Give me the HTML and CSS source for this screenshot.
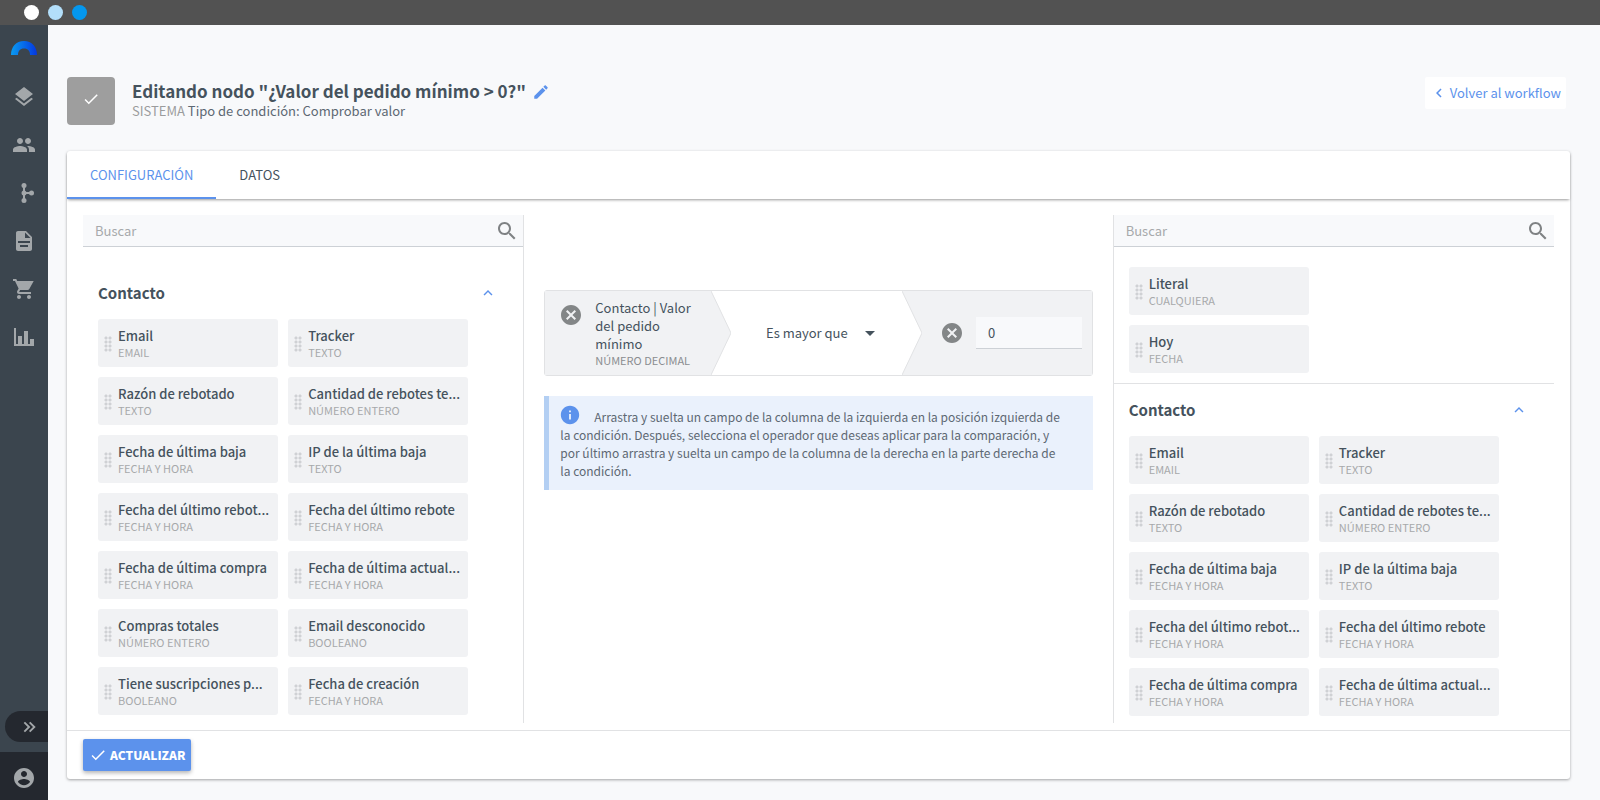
FILE: index.html
```html
<!DOCTYPE html>
<html lang="es">
<head>
    <meta charset="UTF-8">
    <meta name="viewport" content="width=device-width, initial-scale=1.0">
    <title>Editando nodo</title>
    <link rel="stylesheet" href="styles.css">
</head>
<body>
    <svg class="defs" width="0" height="0" aria-hidden="true">
        <symbol id="i-check" viewBox="0 0 24 24"><path d="M9 16.17L4.83 12l-1.42 1.41L9 19 21 7l-1.41-1.41z"/></symbol>
        <symbol id="i-search" viewBox="0 0 24 24"><path d="M15.5 14h-.79l-.28-.27C15.41 12.59 16 11.11 16 9.5 16 5.91 13.09 3 9.5 3S3 5.91 3 9.5 5.91 16 9.5 16c1.61 0 3.09-.59 4.23-1.57l.27.28v.79l5 4.99L20.49 19l-4.99-5zm-6 0C7.01 14 5 11.99 5 9.5S7.01 5 9.5 5 14 7.01 14 9.5 11.99 14 9.5 14z"/></symbol>
        <symbol id="i-cancel" viewBox="0 0 24 24"><path d="M12 2C6.47 2 2 6.47 2 12s4.47 10 10 10 10-4.47 10-10S17.53 2 12 2zm5 13.59L15.59 17 12 13.41 8.41 17 7 15.59 10.59 12 7 8.41 8.41 7 12 10.59 15.59 7 17 8.41 13.41 12 17 15.59z"/></symbol>
        <symbol id="i-up" viewBox="0 0 24 24"><path d="M12 8l-6 6 1.41 1.41L12 10.83l4.59 4.58L18 14z"/></symbol>
    </svg>

    <div class="topbar">
        <span class="dot dot-white"></span>
        <span class="dot dot-light"></span>
        <span class="dot dot-blue"></span>
    </div>

    <div class="app">
        <nav class="sidebar" aria-label="Principal">
            <a href="#" class="logo" aria-label="Inicio">
                <svg width="26" height="14" viewBox="0 0 26 14">
                    <defs>
                        <linearGradient id="arc" x1="0" x2="1" y1="0" y2="0">
                            <stop offset="0" stop-color="#0a9bf0"/>
                            <stop offset="0.6" stop-color="#0560ea"/>
                            <stop offset="1" stop-color="#0637dd"/>
                        </linearGradient>
                    </defs>
                    <path fill="url(#arc)" d="M0 14C0 6 5 0 13 0s13 6 13 14h-7c0-4-2-6.500-6-6.500S7 10 7 14z"/>
                </svg>
            </a>
            <a href="#" class="nav-item" aria-label="Capas"><svg viewBox="0 0 24 24"><path d="M11.99 18.54l-7.37-5.73L3 14.07l9 7 9-7-1.630-1.270-7.380 5.740zM12 16l7.360-5.730L21 9l-9-7-9 7 1.630 1.270L12 16z"/></svg></a>
            <a href="#" class="nav-item" aria-label="Contactos"><svg viewBox="0 0 24 24"><path d="M16 11c1.660 0 2.990-1.340 2.990-3S17.660 5 16 5s-3 1.340-3 3 1.340 3 3 3zm-8 0c1.660 0 2.990-1.340 2.990-3S9.660 5 8 5 5 6.340 5 8s1.340 3 3 3zm0 2c-2.330 0-7 1.170-7 3.500V19h14v-2.500C15 14.170 10.330 13 8 13zm8 0c-.29 0-.62.02-.97.05 1.160.84 1.970 1.970 1.970 3.450V19h6v-2.500c0-2.330-4.670-3.500-7-3.500z"/></svg></a>
            <a href="#" class="nav-item" aria-label="Workflows"><svg viewBox="0 0 24 24"><g fill="none" stroke="currentColor" stroke-width="2"><path d="M12 4v16M12 12h8"/></g><circle cx="12" cy="4.500" r="2.500"/><circle cx="12" cy="12" r="2.500"/><circle cx="12" cy="19.500" r="2.500"/><circle cx="19.500" cy="12" r="2.500"/></svg></a>
            <a href="#" class="nav-item" aria-label="Documentos"><svg viewBox="0 0 24 24"><path d="M14 2H6c-1.100 0-1.990.9-1.990 2L4 20c0 1.100.89 2 1.990 2H18c1.100 0 2-.9 2-2V8l-6-6zm2 16H8v-2h8v2zm2-4H6v-2h12v2zm-5-5V3.500L18.500 9H13z"/></svg></a>
            <a href="#" class="nav-item" aria-label="Pedidos"><svg viewBox="0 0 24 24"><path d="M7 18c-1.100 0-1.990.9-1.990 2S5.900 22 7 22s2-.9 2-2-.9-2-2-2zM1 2v2h2l3.600 7.590-1.350 2.450c-.16.28-.25.61-.25.960 0 1.100.9 2 2 2h12v-2H7.420c-.14 0-.25-.11-.25-.25l.03-.12.900-1.630h7.450c.75 0 1.410-.41 1.750-1.030L21.700 4H5.210l-.94-2H1zm16 16c-1.100 0-1.990.9-1.990 2s.89 2 1.990 2 2-.9 2-2-.9-2-2-2z"/></svg></a>
            <a href="#" class="nav-item" aria-label="Informes"><svg viewBox="0 0 24 24"><path d="M2 3h2v16h18v2H2zM6 11h4v8H6zM12 6h4v13h-4zM18 14h4v5h-4z"/></svg></a>
            <div class="sidebar-end">
                <button type="button" class="expand" aria-label="Expandir"><svg viewBox="0 0 24 24"><path d="M4 6L6 4l8 8-8 8-2-2 6-6zM12 6l2-2 8 8-8 8-2-2 6-6z"/></svg></button>
                <a href="#" class="account" aria-label="Cuenta"><svg viewBox="0 0 24 24"><path d="M12 2C6.480 2 2 6.480 2 12s4.480 10 10 10 10-4.480 10-10S17.520 2 12 2zm0 3c1.660 0 3 1.340 3 3s-1.340 3-3 3-3-1.340-3-3 1.340-3 3-3zm0 14.200c-2.500 0-4.710-1.280-6-3.220.03-1.990 4-3.080 6-3.080 1.990 0 5.970 1.090 6 3.080-1.290 1.940-3.500 3.220-6 3.220z"/></svg></a>
            </div>
        </nav>

        <main class="page">
            <header class="page-header">
                <div class="node-icon"><svg><use href="#i-check"/></svg></div>
                <div class="heading">
                    <div class="title-row">
                        <h1>Editando nodo "¿Valor del pedido mínimo &gt; 0?"</h1>
                        <button type="button" class="edit" aria-label="Editar nombre"><svg viewBox="0 0 24 24"><path d="M3 17.250V21h3.750L17.810 9.940l-3.750-3.750L3 17.250zM20.710 7.040c.39-.39.39-1.020 0-1.410l-2.340-2.340c-.39-.39-1.020-.39-1.410 0l-1.830 1.830 3.750 3.750 1.830-1.830z"/></svg></button>
                    </div>
                    <p class="subtitle"><span>SISTEMA</span> Tipo de condición: Comprobar valor</p>
                </div>
                <a href="#" class="back"><svg viewBox="0 0 24 24"><path d="M15.410 7.410L14 6l-6 6 6 6 1.410-1.410L10.830 12z"/></svg>Volver al workflow</a>
            </header>

            <section class="card">
                <div class="tabs" role="tablist">
                    <button type="button" class="tab active" role="tab" aria-selected="true">CONFIGURACIÓN</button>
                    <button type="button" class="tab" role="tab" aria-selected="false">DATOS</button>
                </div>

                <div class="columns">
                    <div class="column column-left">
                        <label class="search"><input type="search" placeholder="Buscar" aria-label="Buscar"><svg><use href="#i-search"/></svg></label>
                        <div class="group group-left">
                            <div class="group-header"><h2>Contacto</h2><button type="button" aria-label="Plegar Contacto"><svg><use href="#i-up"/></svg></button></div>
                            <ul class="fields">
                                <li class="field"><b>Email</b><small>EMAIL</small></li>
                                <li class="field"><b>Tracker</b><small>TEXTO</small></li>
                                <li class="field"><b>Razón de rebotado</b><small>TEXTO</small></li>
                                <li class="field"><b>Cantidad de rebotes te...</b><small>NÚMERO ENTERO</small></li>
                                <li class="field"><b>Fecha de última baja</b><small>FECHA Y HORA</small></li>
                                <li class="field"><b>IP de la última baja</b><small>TEXTO</small></li>
                                <li class="field"><b>Fecha del último rebot...</b><small>FECHA Y HORA</small></li>
                                <li class="field"><b>Fecha del último rebote</b><small>FECHA Y HORA</small></li>
                                <li class="field"><b>Fecha de última compra</b><small>FECHA Y HORA</small></li>
                                <li class="field"><b>Fecha de última actual...</b><small>FECHA Y HORA</small></li>
                                <li class="field"><b>Compras totales</b><small>NÚMERO ENTERO</small></li>
                                <li class="field"><b>Email desconocido</b><small>BOOLEANO</small></li>
                                <li class="field"><b>Tiene suscripciones p...</b><small>BOOLEANO</small></li>
                                <li class="field"><b>Fecha de creación</b><small>FECHA Y HORA</small></li>
                            </ul>
                        </div>
                    </div>

                    <div class="center">
                        <div class="condition">
                            <div class="operand operand-left">
                                <button type="button" class="remove" aria-label="Quitar campo"><svg><use href="#i-cancel"/></svg></button>
                                <div class="operand-name">Contacto | Valor del pedido mínimo<small>NÚMERO DECIMAL</small></div>
                            </div>
                            <svg class="arrow arrow-out" viewBox="0 0 20 84" preserveAspectRatio="none"><path d="M0 0L20 42L0 84"/></svg>
                            <div class="operator">
                                <select aria-label="Operador">
                                    <option>Es mayor que</option>
                                    <option>Es menor que</option>
                                    <option>Es igual a</option>
                                </select>
                                <svg viewBox="0 0 10 5"><path d="M0 0h10L5 5z"/></svg>
                            </div>
                            <svg class="arrow arrow-in" viewBox="0 0 20 84" preserveAspectRatio="none"><path d="M0 0L20 42L0 84"/></svg>
                            <div class="operand operand-right">
                                <button type="button" class="remove" aria-label="Quitar valor"><svg><use href="#i-cancel"/></svg></button>
                                <input type="text" value="0" aria-label="Valor">
                            </div>
                        </div>
                        <p class="info"><svg viewBox="0 0 24 24"><path d="M12 2C6.480 2 2 6.480 2 12s4.480 10 10 10 10-4.480 10-10S17.520 2 12 2zm1 15h-2v-6h2v6zm0-8h-2V7h2v2z"/></svg>Arrastra y suelta un campo de la columna de la izquierda en la posición izquierda de la condición. Después, selecciona el operador que deseas aplicar para la comparación, y por último arrastra y suelta un campo de la columna de la derecha en la parte derecha de la condición.</p>
                    </div>

                    <div class="column column-right">
                        <label class="search"><input type="search" placeholder="Buscar" aria-label="Buscar"><svg><use href="#i-search"/></svg></label>
                        <ul class="fields fields-basic">
                            <li class="field"><b>Literal</b><small>CUALQUIERA</small></li>
                            <li class="field"><b>Hoy</b><small>FECHA</small></li>
                        </ul>
                        <div class="group">
                            <div class="group-header"><h2>Contacto</h2><button type="button" aria-label="Plegar Contacto"><svg><use href="#i-up"/></svg></button></div>
                            <ul class="fields">
                                <li class="field"><b>Email</b><small>EMAIL</small></li>
                                <li class="field"><b>Tracker</b><small>TEXTO</small></li>
                                <li class="field"><b>Razón de rebotado</b><small>TEXTO</small></li>
                                <li class="field"><b>Cantidad de rebotes te...</b><small>NÚMERO ENTERO</small></li>
                                <li class="field"><b>Fecha de última baja</b><small>FECHA Y HORA</small></li>
                                <li class="field"><b>IP de la última baja</b><small>TEXTO</small></li>
                                <li class="field"><b>Fecha del último rebot...</b><small>FECHA Y HORA</small></li>
                                <li class="field"><b>Fecha del último rebote</b><small>FECHA Y HORA</small></li>
                                <li class="field"><b>Fecha de última compra</b><small>FECHA Y HORA</small></li>
                                <li class="field"><b>Fecha de última actual...</b><small>FECHA Y HORA</small></li>
                            </ul>
                        </div>
                    </div>
                </div>

                <footer class="card-footer">
                    <button type="button" class="submit"><svg><use href="#i-check"/></svg>ACTUALIZAR</button>
                </footer>
            </section>
        </main>
    </div>
</body>
</html>
```

FILE: styles.css
```css
* {
    box-sizing: border-box;
}
body {
    margin: 0;
    min-height: 100vh;
    display: flex;
    flex-direction: column;
    background: #f8f9fb;
    color: #45525d;
    font-family: "Noto Sans CJK SC", "Source Sans Pro", sans-serif;
    font-size: 13px;
    line-height: 18px;
}
button, input, select {
    font: inherit;
    color: inherit;
    border: 0;
    padding: 0;
    background: none;
}
button, select {
    cursor: pointer;
}
a {
    color: inherit;
    text-decoration: none;
}
h1, h2, p, ul {
    margin: 0;
    padding: 0;
}
ul {
    list-style: none;
}
svg {
    display: block;
    flex: none;
    fill: currentColor;
}
.defs {
    position: absolute;
}

/* top bar */
.topbar {
    display: flex;
    align-items: center;
    gap: 9px;
    height: 25px;
    padding-left: 24px;
    background: #525252;
}
.dot {
    width: 15px;
    height: 15px;
    border-radius: 50%;
}
.dot-white { background: #fff; }
.dot-light { background: #b3dffa; }
.dot-blue { background: #0497ee; }

.app {
    flex: 1;
    display: flex;
}

/* sidebar */
.sidebar {
    display: flex;
    flex-direction: column;
    width: 48px;
    background: #3b454e;
    color: #a3a7aa;
}
.logo {
    display: flex;
    justify-content: center;
    height: 48px;
    padding-top: 16px;
}
.nav-item {
    display: flex;
    align-items: center;
    justify-content: center;
    height: 48px;
}
.nav-item svg, .account svg {
    width: 24px;
    height: 24px;
}
.sidebar-end {
    display: flex;
    flex-direction: column;
    align-items: flex-end;
    gap: 10px;
    margin-top: auto;
}
.expand {
    display: flex;
    align-items: center;
    justify-content: center;
    width: 43px;
    height: 31px;
    padding-left: 4px;
    border-radius: 16px 0 0 16px;
    background: #24282f;
}
.expand svg {
    width: 16px;
    height: 16px;
}
.account {
    display: flex;
    align-items: center;
    justify-content: center;
    width: 48px;
    height: 48px;
    padding-top: 4px;
    background: #24282f;
}

/* page */
.page {
    flex: 1;
    display: flex;
    flex-direction: column;
    gap: 26px;
    min-width: 0;
    padding: 52px 30px 21px 19px;
}
.page-header {
    display: flex;
    align-items: flex-start;
    padding-right: 4px;
}
.node-icon {
    display: flex;
    align-items: center;
    justify-content: center;
    width: 48px;
    height: 48px;
    padding-bottom: 4px;
    border-radius: 4px;
    background: #9e9e9e;
    color: #fff;
}
.node-icon svg {
    width: 18px;
    height: 18px;
}
.heading {
    flex: 1;
    padding: 3px 17px 0;
}
.title-row {
    display: flex;
    align-items: center;
    gap: 6px;
}
h1 {
    font-size: 17px;
    line-height: 22px;
}
.edit {
    padding-top: 2px;
    color: #5c92ec;
}
.edit svg {
    width: 18px;
    height: 18px;
}
.subtitle {
    color: #5d6873;
}
.subtitle span {
    color: #9b9c9d;
}
.back {
    display: flex;
    align-items: center;
    gap: 2px;
    height: 32px;
    padding: 0 5px;
    border-radius: 2px;
    background: #fff;
    color: #5c92ec;
}
.back svg {
    width: 18px;
    height: 18px;
}

/* card */
.card {
    flex: 1;
    display: flex;
    flex-direction: column;
    border-radius: 3px;
    background: #fff;
    box-shadow: 0 1px 3px rgba(0, 0, 0, 0.35);
}
.tabs {
    display: flex;
    height: 48px;
    border-radius: 3px 3px 0 0;
    box-shadow: 0 2px 3px -1px rgba(0, 0, 0, 0.4);
}
.tab {
    padding: 2px 23px 0;
    border-bottom: 2px solid transparent;
}
.tab.active {
    border-color: #5c92ec;
    color: #5c92ec;
}
.columns {
    flex: 1;
    display: grid;
    grid-template-columns: 3fr 4fr 3fr;
    padding: 16px 16px 7px;
}
.column {
    min-width: 0;
}
.column-left {
    border-right: 1px solid #e1e2e4;
}
.column-right {
    border-left: 1px solid #e1e2e4;
}
.search {
    display: flex;
    align-items: center;
    height: 32px;
    padding: 0 4px 0 12px;
    border-bottom: 1px solid #cdd1d6;
    background: #f8f9fb;
    color: #7f8284;
}
.search input {
    flex: 1;
    min-width: 0;
    color: #45525d;
    outline: none;
}
.search input::placeholder {
    color: #a7a9ab;
}
.search svg {
    width: 24px;
    height: 24px;
}

.group {
    padding: 0 15px;
}
.group-left {
    padding-top: 20px;
}
.group-header {
    display: flex;
    align-items: center;
    justify-content: space-between;
    height: 52px;
    padding-right: 11px;
}
.group-header button {
    color: #5c92ec;
}
.group-header svg {
    width: 18px;
    height: 18px;
}
h2 {
    font-size: 15px;
    line-height: 20px;
}
.fields {
    display: grid;
    grid-template-columns: 1fr 1fr;
    gap: 10px;
    padding-right: 40px;
}
.fields-basic {
    padding: 20px 55px 10px 15px;
    border-bottom: 1px solid #e1e2e4;
}
.fields-basic .field {
    grid-column: 1;
}
.field {
    display: grid;
    grid-template-columns: 8px 1fr;
    column-gap: 6px;
    align-content: center;
    height: 48px;
    padding: 1px 2px 0 6px;
    border-radius: 3px;
    background: #f1f2f4;
    cursor: grab;
}
/* drag handle */
.field::before {
    content: "";
    grid-row: 1 / 3;
    align-self: center;
    height: 16px;
    background: radial-gradient(circle, #cfd1d4 1px, transparent 2px) 0 0 / 4px 4px;
}
.field b {
    font-weight: 500;
    white-space: nowrap;
}
small {
    display: block;
    font-size: 11px;
    line-height: 15px;
}
.field small {
    color: #a7a9ab;
}

/* condition */
.center {
    min-width: 0;
    padding: 75px 20px 0;
}
.condition {
    display: grid;
    grid-template-columns: minmax(0, 166fr) 20px minmax(0, 171fr) 20px minmax(0, 170fr);
    min-height: 86px;
    border: 1px solid #e1e2e4;
    border-radius: 3px;
}
.arrow {
    width: 100%;
    height: 100%;
    stroke: #e1e2e4;
}
.arrow-out {
    fill: #f1f2f4;
}
.arrow-in {
    background: #f1f2f4;
    fill: #fff;
}
.operand {
    display: flex;
    background: #f1f2f4;
}
.operand-left {
    gap: 12px;
    padding: 8px 8px 7px 14px;
}
.operand-left .remove {
    align-self: flex-start;
    padding-top: 4px;
}
.operand-name small {
    color: #8a8d90;
}
.operand-right {
    align-items: center;
    gap: 12px;
    padding: 0 10px 0 18px;
}
.operand-right input {
    flex: 1;
    min-width: 0;
    height: 32px;
    padding: 0 12px;
    border-bottom: 1px solid #cdd1d6;
    background: #f8f9fb;
}
.remove {
    color: #838687;
}
.remove svg {
    width: 24px;
    height: 24px;
}
.operator {
    display: grid;
    align-items: center;
    justify-content: center;
    padding-left: 8px;
}
.operator select {
    grid-area: 1 / 1;
    padding-right: 26px;
    appearance: none;
}
.operator svg {
    grid-area: 1 / 1;
    justify-self: end;
    width: 10px;
    height: 5px;
    pointer-events: none;
}
.info {
    margin-top: 20px;
    padding: 12px 25px 10px 11px;
    border-left: 5px solid #b3cff3;
    background: #eaf1fc;
    color: #5d6873;
    font-size: 12px;
}
.info svg {
    display: inline-block;
    width: 22px;
    height: 22px;
    margin: -4px 13px -4px -1px;
    color: #5c92ec;
}

/* footer */
.card-footer {
    padding: 8px 16px;
    border-top: 1px solid #e1e2e4;
}
.submit {
    display: flex;
    align-items: center;
    gap: 3px;
    height: 32px;
    padding: 0 6px;
    border-radius: 2px;
    background: #5c92ec;
    box-shadow: 0 2px 4px rgba(0, 0, 0, 0.3);
    color: #fff;
    font-size: 12px;
    font-weight: 900;
}
.submit svg {
    width: 18px;
    height: 18px;
}
```
